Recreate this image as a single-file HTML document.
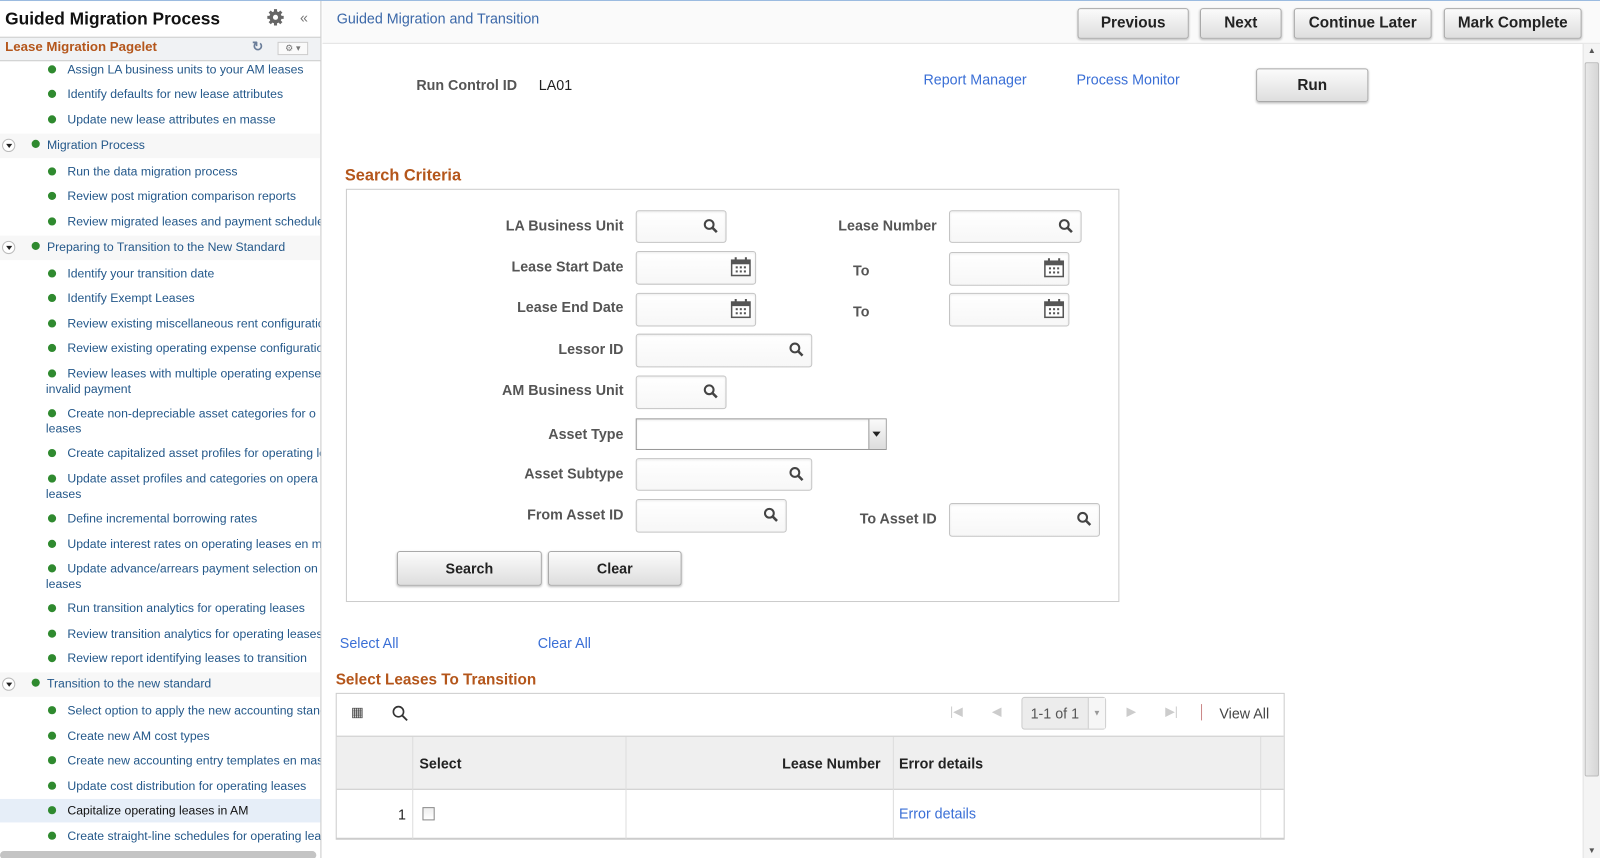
<!DOCTYPE html>
<html><head><meta charset="utf-8"><style>
*{box-sizing:border-box;margin:0;padding:0}
html,body{width:1600px;height:858px;overflow:hidden;background:#fff}
#wrap{position:absolute;left:0;top:0;width:1568px;height:841px;transform:scale(1.0204);transform-origin:0 0;font-family:"Liberation Sans",Arial,sans-serif;border-top:1px solid #9bbbe0;overflow:hidden}
.a{position:absolute;white-space:nowrap}
#side{position:absolute;left:0;top:0;width:315px;height:841px;border-right:1px solid #c9c9c9;overflow:hidden}
.it{position:absolute;left:66px;font-size:12px;color:#24588a;line-height:15px;white-space:nowrap}
.it::before{content:"";position:absolute;left:-19px;top:3px;width:8px;height:8px;border-radius:50%;background:#2f8a2f}
.it.w{white-space:normal;width:300px;left:45px;text-indent:21px}
.it.w::before{left:2px}
.hd{position:absolute;left:0;width:315px;height:24px;background:#f7f7f7;font-size:12px;color:#24588a}
.hd span{position:absolute;left:46px;top:4px}
.hd i{position:absolute;left:31px;top:6px;width:8px;height:8px;border-radius:50%;background:#2f8a2f}
.hd b{position:absolute;left:2px;top:5px;width:13px;height:13px;border:1px solid #bbb;border-radius:50%;background:#fff}
.hd b::after{content:"";position:absolute;left:3px;top:4px;border:3px solid transparent;border-top:4px solid #222}
.btn{position:absolute;border:1px solid #a9a9a9;border-radius:3px;background:linear-gradient(#fbfbfb,#dedede);font-weight:bold;font-size:15px;color:#222;text-align:center;box-shadow:0 1px 2px rgba(0,0,0,.25)}
.lbl{position:absolute;font-weight:bold;font-size:14px;color:#555;text-align:right;white-space:nowrap}
.in{position:absolute;border:1px solid #c4c4c4;border-radius:3px;background:linear-gradient(#fff,#f7f7f7);box-shadow:inset 0 1px 2px rgba(0,0,0,.08)}
.lnk{position:absolute;color:#3a6fd6;font-size:14px;white-space:nowrap}
.or{position:absolute;color:#b4561b;font-weight:bold;font-size:16px;white-space:nowrap}
svg{position:absolute}
</style></head><body><div id="wrap">
<div id="side">
<div class="a" style="left:5px;top:8px;font-size:17px;font-weight:bold;color:#111">Guided Migration Process</div>
<svg style="left:261px;top:7px" width="18" height="18" viewBox="0 0 18 18"><circle cx="9" cy="9" r="6" fill="#666"/><g stroke="#666" stroke-width="3"><line x1="9" y1="1" x2="9" y2="17"/><line x1="1" y1="9" x2="17" y2="9"/><line x1="3.3" y1="3.3" x2="14.7" y2="14.7"/><line x1="14.7" y1="3.3" x2="3.3" y2="14.7"/></g><circle cx="9" cy="9" r="2.5" fill="#fff"/></svg>
<div class="a" style="left:294px;top:8px;font-size:14px;color:#777">«</div>
<div class="a" style="left:0;top:35px;width:315px;height:24px;background:#f0f2f4;border-top:1px solid #ccc;border-bottom:1px solid #ccc"></div>
<div class="a" style="left:5px;top:37px;font-size:13px;font-weight:bold;color:#b4561b">Lease Migration Pagelet</div>
<div class="a" style="left:247px;top:37px;font-size:13px;color:#6a7d99;font-weight:bold">↻</div>
<div class="a" style="left:272px;top:40px;width:30px;height:13px;border:1px solid #ccc;background:#fafafa;font-size:9px;color:#777;text-align:center;line-height:11px">⚙ ▾</div>
<div class="it" style="top:60px">Assign LA business units to your AM leases</div>
<div class="it" style="top:84px">Identify defaults for new lease attributes</div>
<div class="it" style="top:109px">Update new lease attributes en masse</div>
<div class="hd" style="top:130px"><b></b><i></i><span>Migration Process</span></div>
<div class="it" style="top:160px">Run the data migration process</div>
<div class="it" style="top:184px">Review post migration comparison reports</div>
<div class="it" style="top:209px">Review migrated leases and payment schedules</div>
<div class="hd" style="top:230px"><b></b><i></i><span>Preparing to Transition to the New Standard</span></div>
<div class="it" style="top:260px">Identify your transition date</div>
<div class="it" style="top:284px">Identify Exempt Leases</div>
<div class="it" style="top:309px">Review existing miscellaneous rent configuration</div>
<div class="it" style="top:333px">Review existing operating expense configuration</div>
<div class="it w" style="top:358px">Review leases with multiple operating expense invalid payment</div>
<div class="it w" style="top:397px">Create non-depreciable asset categories for o leases</div>
<div class="it" style="top:436px">Create capitalized asset profiles for operating leases</div>
<div class="it w" style="top:461px">Update asset profiles and categories on opera leases</div>
<div class="it" style="top:500px">Define incremental borrowing rates</div>
<div class="it" style="top:525px">Update interest rates on operating leases en masse</div>
<div class="it w" style="top:549px">Update advance/arrears payment selection on leases</div>
<div class="it" style="top:588px">Run transition analytics for operating leases</div>
<div class="it" style="top:613px">Review transition analytics for operating leases</div>
<div class="it" style="top:637px">Review report identifying leases to transition</div>
<div class="hd" style="top:658px"><b></b><i></i><span>Transition to the new standard</span></div>
<div class="it" style="top:688px">Select option to apply the new accounting standard</div>
<div class="it" style="top:713px">Create new AM cost types</div>
<div class="it" style="top:737px">Create new accounting entry templates en masse</div>
<div class="it" style="top:762px">Update cost distribution for operating leases</div>
<div class="a" style="left:0;top:782px;width:315px;height:23px;background:#e6eef8"></div>
<div class="it" style="top:786px;color:#111">Capitalize operating leases in AM</div>
<div class="it" style="top:811px">Create straight-line schedules for operating leases</div>
<div class="a" style="left:0;top:833px;width:310px;height:8px;background:#c4c4c4;border-radius:4px"></div>
</div>

<div class="a" style="left:316px;top:0;width:1284px;height:42px;background:#fafafa;border-bottom:1px solid #e4e4e4"></div>
<div class="a" style="left:330px;top:9px;font-size:14px;color:#3a67a8">Guided Migration and Transition</div>
<div class="btn" style="left:1056px;top:7px;width:109px;height:30px;line-height:28px">Previous</div>
<div class="btn" style="left:1176px;top:7px;width:80px;height:30px;line-height:28px">Next</div>
<div class="btn" style="left:1268px;top:7px;width:135px;height:30px;line-height:28px">Continue Later</div>
<div class="btn" style="left:1415px;top:7px;width:135px;height:30px;line-height:28px">Mark Complete</div>
<div class="a" style="left:1551px;top:42px;width:17px;height:800px;background:#f4f4f4;border-left:1px solid #e4e4e4"></div>
<div class="a" style="left:1553px;top:60px;width:14px;height:700px;background:linear-gradient(90deg,#e8e8e8,#d6d6d6);border:1px solid #bbb;border-radius:2px"></div>
<div class="a" style="left:1556px;top:44px;font-size:8px;color:#555">▲</div>
<div class="a" style="left:1556px;top:828px;font-size:8px;color:#555">▼</div>

<div class="lbl" style="left:408px;top:74px">Run Control ID</div>
<div class="a" style="left:528px;top:74px;font-size:14px;color:#222">LA01</div>
<div class="lnk" style="left:905px;top:69px">Report Manager</div>
<div class="lnk" style="left:1055px;top:69px">Process Monitor</div>
<div class="btn" style="left:1231px;top:66px;width:110px;height:33px;line-height:31px">Run</div>

<div class="or" style="left:338px;top:163px">Search Criteria</div>
<div class="a" style="left:339px;top:184px;width:758px;height:405px;border:1px solid #ccc"></div>

<div class="lbl" style="left:400px;width:211px;top:212px">LA Business Unit</div>
<div class="lbl" style="left:400px;width:211px;top:252px">Lease Start Date</div>
<div class="lbl" style="left:400px;width:211px;top:292px">Lease End Date</div>
<div class="lbl" style="left:400px;width:211px;top:333px">Lessor ID</div>
<div class="lbl" style="left:400px;width:211px;top:373px">AM Business Unit</div>
<div class="lbl" style="left:400px;width:211px;top:416px">Asset Type</div>
<div class="lbl" style="left:400px;width:211px;top:455px">Asset Subtype</div>
<div class="lbl" style="left:400px;width:211px;top:495px">From Asset ID</div>
<div class="lbl" style="left:700px;width:218px;top:212px">Lease Number</div>
<div class="lbl" style="left:836px;top:256px">To</div>
<div class="lbl" style="left:836px;top:296px">To</div>
<div class="lbl" style="left:700px;width:218px;top:499px">To Asset ID</div>

<div class="in" style="left:623px;top:205px;width:89px;height:32px"></div>
<div class="in" style="left:623px;top:245px;width:118px;height:33px"></div>
<div class="in" style="left:623px;top:286px;width:118px;height:33px"></div>
<div class="in" style="left:623px;top:326px;width:173px;height:33px"></div>
<div class="in" style="left:623px;top:367px;width:89px;height:33px"></div>
<div class="in" style="left:623px;top:409px;width:246px;height:31px;border-radius:0;border-color:#999;background:#fff"></div>
<div class="a" style="left:851px;top:410px;width:17px;height:29px;background:linear-gradient(#fafafa,#ddd);border-left:1px solid #999"></div>
<div class="a" style="left:855px;top:422px;border:4px solid transparent;border-top:5px solid #222"></div>
<div class="in" style="left:623px;top:448px;width:173px;height:32px"></div>
<div class="in" style="left:623px;top:488px;width:148px;height:33px"></div>
<div class="in" style="left:930px;top:205px;width:130px;height:32px"></div>
<div class="in" style="left:930px;top:246px;width:118px;height:33px"></div>
<div class="in" style="left:930px;top:286px;width:118px;height:33px"></div>
<div class="in" style="left:930px;top:492px;width:148px;height:33px"></div>

<svg style="left:689px;top:213px" width="15" height="15" viewBox="0 0 15 15"><circle cx="6" cy="6" r="4.3" fill="none" stroke="#444" stroke-width="2"/><line x1="9" y1="9" x2="13.5" y2="13.5" stroke="#444" stroke-width="2.5"/></svg>
<svg style="left:773px;top:334px" width="15" height="15" viewBox="0 0 15 15"><circle cx="6" cy="6" r="4.3" fill="none" stroke="#444" stroke-width="2"/><line x1="9" y1="9" x2="13.5" y2="13.5" stroke="#444" stroke-width="2.5"/></svg>
<svg style="left:689px;top:375px" width="15" height="15" viewBox="0 0 15 15"><circle cx="6" cy="6" r="4.3" fill="none" stroke="#444" stroke-width="2"/><line x1="9" y1="9" x2="13.5" y2="13.5" stroke="#444" stroke-width="2.5"/></svg>
<svg style="left:773px;top:456px" width="15" height="15" viewBox="0 0 15 15"><circle cx="6" cy="6" r="4.3" fill="none" stroke="#444" stroke-width="2"/><line x1="9" y1="9" x2="13.5" y2="13.5" stroke="#444" stroke-width="2.5"/></svg>
<svg style="left:748px;top:496px" width="15" height="15" viewBox="0 0 15 15"><circle cx="6" cy="6" r="4.3" fill="none" stroke="#444" stroke-width="2"/><line x1="9" y1="9" x2="13.5" y2="13.5" stroke="#444" stroke-width="2.5"/></svg>
<svg style="left:1037px;top:213px" width="15" height="15" viewBox="0 0 15 15"><circle cx="6" cy="6" r="4.3" fill="none" stroke="#444" stroke-width="2"/><line x1="9" y1="9" x2="13.5" y2="13.5" stroke="#444" stroke-width="2.5"/></svg>
<svg style="left:1055px;top:500px" width="15" height="15" viewBox="0 0 15 15"><circle cx="6" cy="6" r="4.3" fill="none" stroke="#444" stroke-width="2"/><line x1="9" y1="9" x2="13.5" y2="13.5" stroke="#444" stroke-width="2.5"/></svg>
<svg style="left:716px;top:251px" width="20" height="19" viewBox="0 0 20 19"><rect x="1" y="3" width="18" height="15" fill="#fff" stroke="#555" stroke-width="1.5"/><rect x="1" y="3" width="18" height="4" fill="#555"/><rect x="4" y="0" width="2" height="4" fill="#555"/><rect x="14" y="0" width="2" height="4" fill="#555"/><g fill="#555"><rect x="5" y="9" width="2" height="2"/><rect x="9" y="9" width="2" height="2"/><rect x="13" y="9" width="2" height="2"/><rect x="5" y="13" width="2" height="2"/><rect x="9" y="13" width="2" height="2"/><rect x="13" y="13" width="2" height="2"/></g></svg>
<svg style="left:716px;top:292px" width="20" height="19" viewBox="0 0 20 19"><rect x="1" y="3" width="18" height="15" fill="#fff" stroke="#555" stroke-width="1.5"/><rect x="1" y="3" width="18" height="4" fill="#555"/><rect x="4" y="0" width="2" height="4" fill="#555"/><rect x="14" y="0" width="2" height="4" fill="#555"/><g fill="#555"><rect x="5" y="9" width="2" height="2"/><rect x="9" y="9" width="2" height="2"/><rect x="13" y="9" width="2" height="2"/><rect x="5" y="13" width="2" height="2"/><rect x="9" y="13" width="2" height="2"/><rect x="13" y="13" width="2" height="2"/></g></svg>
<svg style="left:1023px;top:252px" width="20" height="19" viewBox="0 0 20 19"><rect x="1" y="3" width="18" height="15" fill="#fff" stroke="#555" stroke-width="1.5"/><rect x="1" y="3" width="18" height="4" fill="#555"/><rect x="4" y="0" width="2" height="4" fill="#555"/><rect x="14" y="0" width="2" height="4" fill="#555"/><g fill="#555"><rect x="5" y="9" width="2" height="2"/><rect x="9" y="9" width="2" height="2"/><rect x="13" y="9" width="2" height="2"/><rect x="5" y="13" width="2" height="2"/><rect x="9" y="13" width="2" height="2"/><rect x="13" y="13" width="2" height="2"/></g></svg>
<svg style="left:1023px;top:292px" width="20" height="19" viewBox="0 0 20 19"><rect x="1" y="3" width="18" height="15" fill="#fff" stroke="#555" stroke-width="1.5"/><rect x="1" y="3" width="18" height="4" fill="#555"/><rect x="4" y="0" width="2" height="4" fill="#555"/><rect x="14" y="0" width="2" height="4" fill="#555"/><g fill="#555"><rect x="5" y="9" width="2" height="2"/><rect x="9" y="9" width="2" height="2"/><rect x="13" y="9" width="2" height="2"/><rect x="5" y="13" width="2" height="2"/><rect x="9" y="13" width="2" height="2"/><rect x="13" y="13" width="2" height="2"/></g></svg>

<div class="btn" style="left:389px;top:539px;width:142px;height:34px;line-height:32px;font-size:14px">Search</div>
<div class="btn" style="left:537px;top:539px;width:131px;height:34px;line-height:32px;font-size:14px">Clear</div>

<div class="lnk" style="left:333px;top:621px">Select All</div>
<div class="lnk" style="left:527px;top:621px">Clear All</div>
<div class="or" style="left:329px;top:657px;font-size:15px">Select Leases To Transition</div>

<div class="a" style="left:329px;top:678px;width:930px;height:144px;border:1px solid #ccc;border-bottom:2px solid #ccc"></div>
<div class="a" style="left:330px;top:720px;width:928px;height:53px;background:#efefef;border-top:1px solid #ccc;border-bottom:1px solid #ccc"></div>
<div class="a" style="left:404px;top:721px;width:1px;height:100px;background:#ddd"></div>
<div class="a" style="left:613px;top:721px;width:1px;height:100px;background:#ddd"></div>
<div class="a" style="left:875px;top:721px;width:1px;height:100px;background:#ddd"></div>
<div class="a" style="left:1235px;top:721px;width:1px;height:100px;background:#ddd"></div>
<div class="a" style="left:344px;top:689px;font-size:13px;color:#444">▦</div>
<svg style="left:384px;top:690px" width="16" height="16" viewBox="0 0 16 16"><circle cx="6.5" cy="6.5" r="5" fill="none" stroke="#333" stroke-width="1.6"/><line x1="10" y1="10" x2="15" y2="15" stroke="#333" stroke-width="1.8"/></svg>
<div class="a" style="left:931px;top:689px;font-size:12px;color:#ccc">|◀</div>
<div class="a" style="left:972px;top:689px;font-size:12px;color:#ccc">◀</div>
<div class="a" style="left:1001px;top:682px;width:83px;height:32px;border:1px solid #ccc;border-radius:3px;background:#ececec"></div>
<div class="a" style="left:1010px;top:690px;font-size:14px;color:#555">1-1 of 1</div>
<div class="a" style="left:1066px;top:683px;width:17px;height:30px;border-left:1px solid #ccc;background:#f6f6f6;font-size:8px;color:#999;text-align:center;line-height:30px">▼</div>
<div class="a" style="left:1104px;top:689px;font-size:12px;color:#ccc">▶</div>
<div class="a" style="left:1142px;top:689px;font-size:12px;color:#ccc">▶|</div>
<div class="a" style="left:1177px;top:689px;width:1px;height:16px;background:#c88"></div>
<div class="a" style="left:1195px;top:690px;font-size:14px;color:#444">View All</div>
<div class="a" style="left:411px;top:739px;font-size:14px;font-weight:bold;color:#222">Select</div>
<div class="a" style="left:614px;width:249px;top:739px;font-size:14px;font-weight:bold;color:#222;text-align:right">Lease Number</div>
<div class="a" style="left:881px;top:739px;font-size:14px;font-weight:bold;color:#222">Error details</div>
<div class="a" style="left:390px;top:789px;font-size:14px;color:#222">1</div>
<div class="a" style="left:414px;top:790px;width:12px;height:13px;border:1px solid #888;background:linear-gradient(#eee,#fff)"></div>
<div class="lnk" style="left:881px;top:788px">Error details</div>
</div></body></html>
